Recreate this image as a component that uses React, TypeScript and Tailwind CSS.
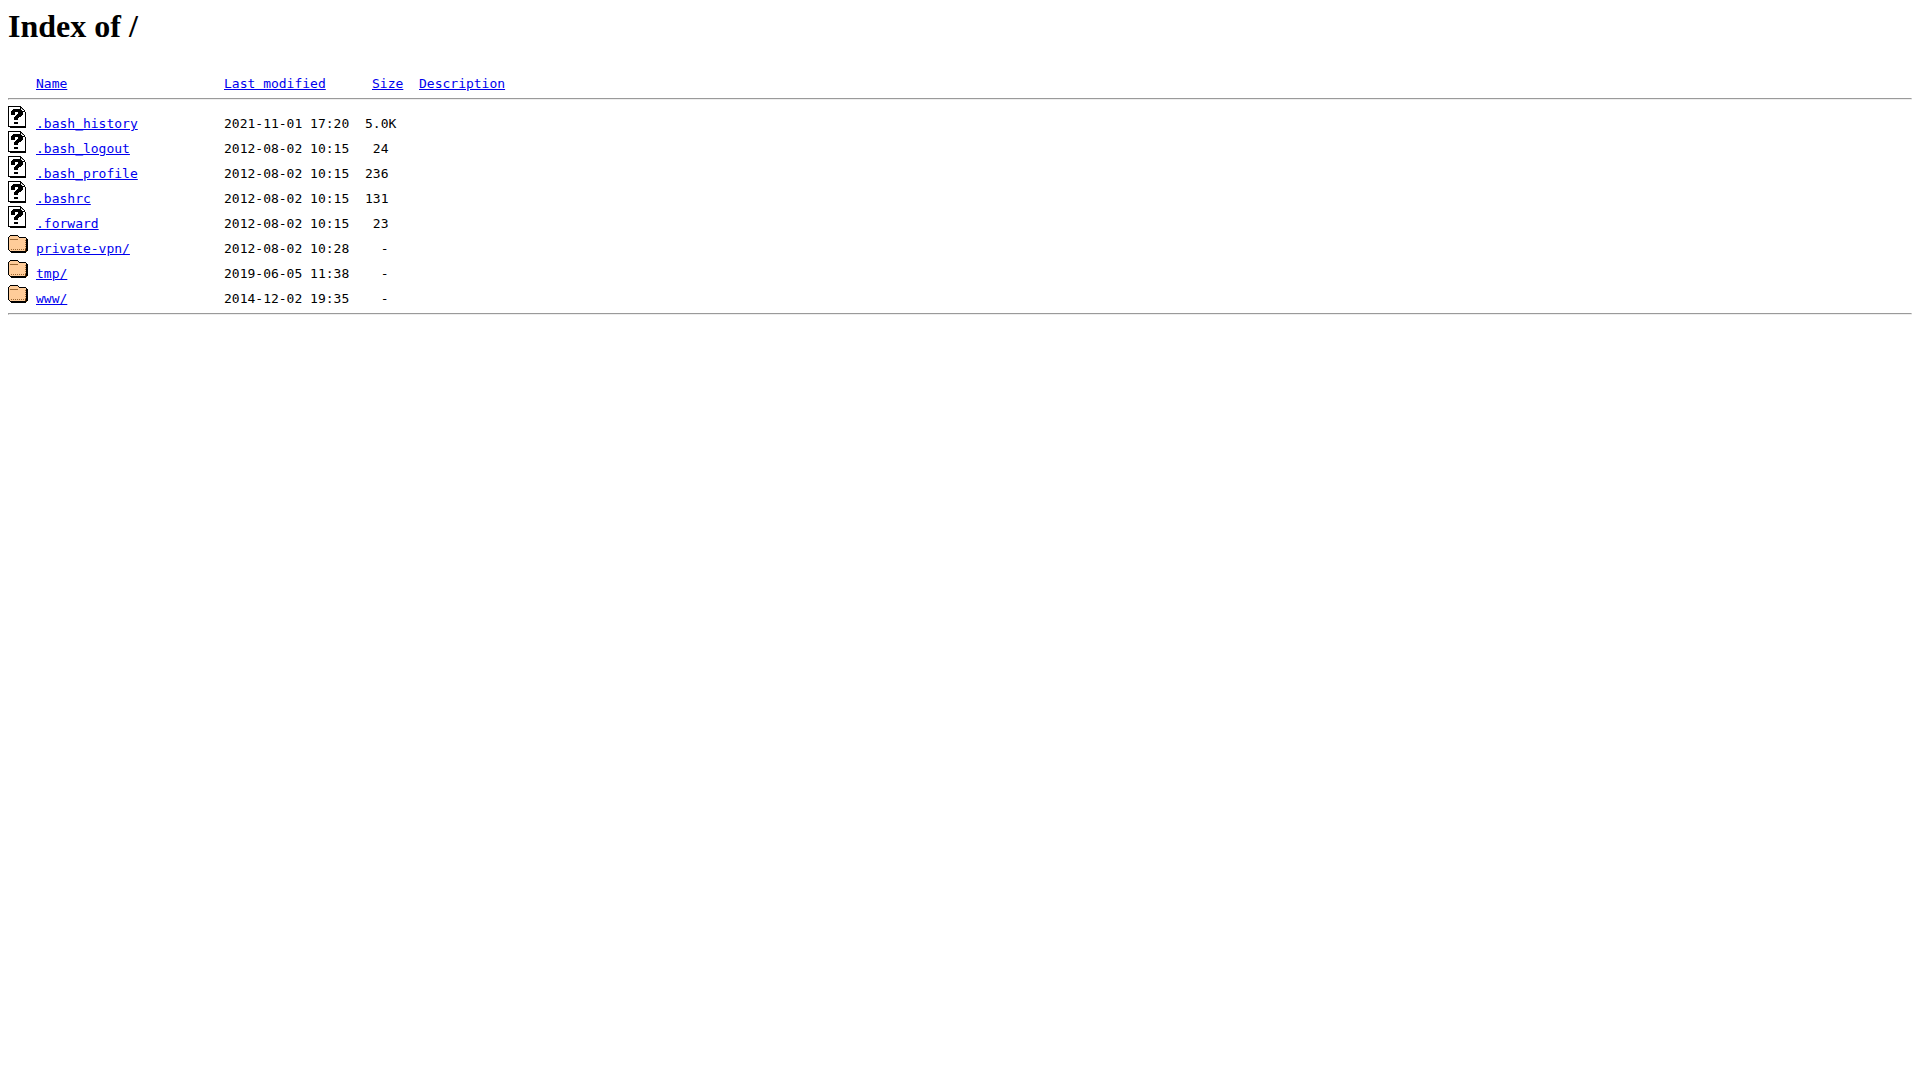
type Entry = {
  name: string
  modified: string
  size: string
  kind: 'file' | 'folder'
}

const entries: Entry[] = [
  { name: '.bash_history', modified: '2021-11-01 17:20', size: '5.0K', kind: 'file' },
  { name: '.bash_logout', modified: '2012-08-02 10:15', size: ' 24 ', kind: 'file' },
  { name: '.bash_profile', modified: '2012-08-02 10:15', size: '236 ', kind: 'file' },
  { name: '.bashrc', modified: '2012-08-02 10:15', size: '131 ', kind: 'file' },
  { name: '.forward', modified: '2012-08-02 10:15', size: ' 23 ', kind: 'file' },
  { name: 'private-vpn/', modified: '2012-08-02 10:28', size: '  - ', kind: 'folder' },
  { name: 'tmp/', modified: '2019-06-05 11:38', size: '  - ', kind: 'folder' },
  { name: 'www/', modified: '2014-12-02 19:35', size: '  - ', kind: 'folder' },
]

// one character per pixel
const filePixels = [
  '#############.......',
  '#...........##......',
  '#...........#g#.....',
  '#....########.g#....',
  '#...##########..#...',
  '#..##############...',
  '#..####...#####..#..',
  '#..####...#####..#..',
  '#..####..######..#..',
  '#.......######...#..',
  '#......######....#..',
  '#.....#####......#..',
  '#.....####.......#..',
  '#.....####.......#..',
  '#................#..',
  '#................#..',
  '#.....####.......#..',
  '#.....####.......#..',
  '#................#..',
  '#................#..',
  '##################..',
  '..################..',
]

const folderPixels = [
  '....................',
  '....................',
  '....................',
  '....................',
  '..########..........',
  '.#oooooooo#.........',
  '#oooooooooo#######..',
  '#ooooooooooooooooo#.',
  '#obbbbbbbboooooooo##',
  '#oooooooooooooooob##',
  '#ooooooooooooooooo##',
  '#oooooooooooooooob##',
  '#ooooooooooooooooo##',
  '#oooooooooooooooob##',
  '#ooooooooooooooooo##',
  '#oooooooooooooooob##',
  '#ooooooooooooooooo##',
  '#oooooooooooooooob##',
  '#oobobobobobobobod##',
  '.#oooooooooooooood##',
  '..################d.',
  '...###############..',
]

const colors: Record<string, string> = {
  '#': '#000000',
  g: '#999999',
  o: '#ffcc99',
  b: '#996633',
  d: '#663300',
}

function PixelIcon({ pixels, label }: { pixels: string[]; label: string }) {
  return (
    <svg
      role="img"
      aria-label={label}
      width="20"
      height="22"
      viewBox="0 0 20 22"
      shapeRendering="crispEdges"
      className="inline-block align-baseline"
    >
      {pixels.map((row, y) =>
        row.split('').map((c, x) =>
          colors[c] ? (
            <rect key={`${x}-${y}`} x={x} y={y} width="1" height="1" fill={colors[c]} />
          ) : null,
        ),
      )}
    </svg>
  )
}

function Rule() {
  return (
    <hr className="mt-[7px] mb-[6px] border border-t-[#9a9a9a] border-r-[#eeeeee] border-b-[#eeeeee] border-l-[#9a9a9a]" />
  )
}

const link = 'text-[#0000ee] underline'

export default function App() {
  return (
    <main className="min-h-screen bg-white p-2 text-black">
      <h1 className="mb-[31px] font-['Liberation_Serif',serif] text-[32px] leading-[37px] font-bold">
        Index of /
      </h1>
      <table className="w-full table-fixed border-collapse text-left font-['DejaVu_Sans_Mono',monospace] text-[13px] leading-[15px]">
        <colgroup>
          <col className="w-[28px]" />
          <col className="w-[188px]" />
          <col className="w-[141px]" />
          <col className="w-[54px]" />
          <col />
        </colgroup>
        <thead>
          <tr className="align-baseline">
            <td className="p-0" />
            <th className="p-0 font-normal">
              <a href="?C=N;O=D" className={link}>Name</a>
            </th>
            <th className="p-0 font-normal">
              <a href="?C=M;O=A" className={link}>Last modified</a>
            </th>
            <th className="py-0 pr-0 pl-[7px] font-normal">
              <a href="?C=S;O=A" className={link}>Size</a>
            </th>
            <th className="p-0 font-normal">
              <a href="?C=D;O=A" className={link}>Description</a>
            </th>
          </tr>
          <tr>
            <td colSpan={5} className="p-0">
              <Rule />
            </td>
          </tr>
        </thead>
        <tbody>
          {entries.map((entry) => (
            <tr key={entry.name} className="align-baseline">
              <td className="p-0">
                {entry.kind === 'folder' ? (
                  <PixelIcon pixels={folderPixels} label="[DIR]" />
                ) : (
                  <PixelIcon pixels={filePixels} label="[   ]" />
                )}
              </td>
              <td className="p-0">
                <a href={entry.name} className={link}>{entry.name}</a>
              </td>
              <td className="p-0">{entry.modified}</td>
              <td className="p-0 whitespace-pre">{entry.size}</td>
              <td className="p-0" />
            </tr>
          ))}
        </tbody>
      </table>
      <Rule />
    </main>
  )
}
